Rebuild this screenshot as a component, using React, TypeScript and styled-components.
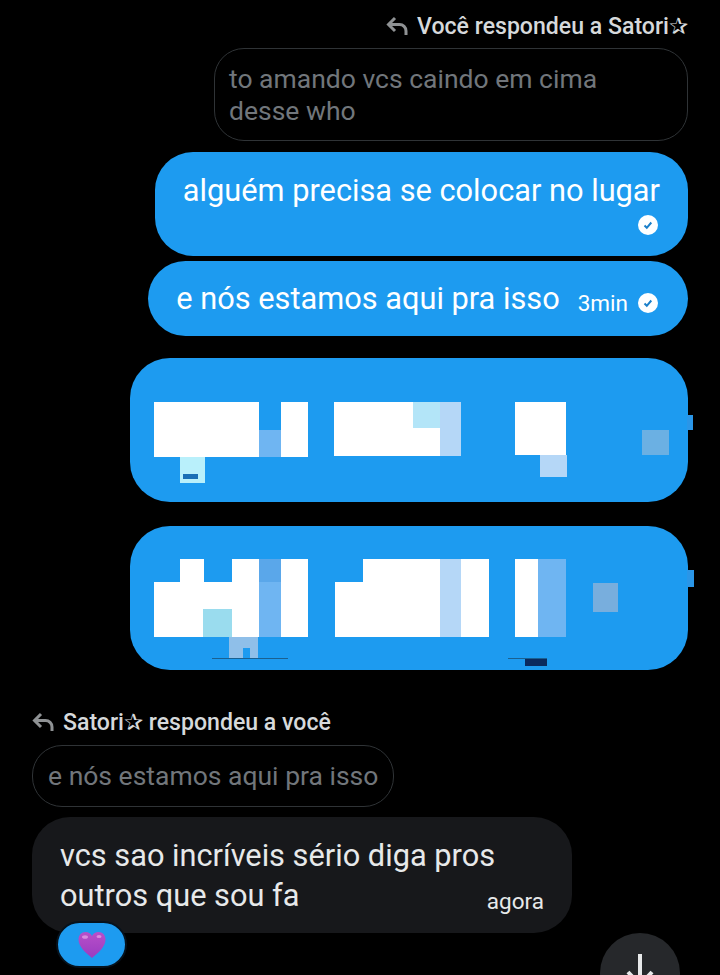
import styled, { createGlobalStyle } from "styled-components";

const BLUE = "#1d9bf0";
const PALE = "#b5d7f7";
const MID = "#6fb5f2";

const GlobalStyle = createGlobalStyle`
  html, body {
    margin: 0;
    padding: 0;
    background: #000;
  }
`;

const Page = styled.div`
  position: relative;
  width: 720px;
  height: 975px;
  overflow: hidden;
  background: #000;
  font-family: Roboto, "Liberation Sans", sans-serif;
  display: flex;
  flex-direction: column;
`;

const Group = styled.section<{ $mine?: boolean }>`
  display: flex;
  flex-direction: column;
  align-items: ${(p) => (p.$mine ? "flex-end" : "flex-start")};
  padding: ${(p) => (p.$mine ? "12px 32px 0 0" : "38px 0 0 32px")};
`;

const ReplyLabel = styled.div`
  display: flex;
  align-items: center;
  gap: 9px;
  height: 28px;
  color: #d6d9db;
  font-size: 23.100px;
  font-weight: 500;
  white-space: nowrap;
`;

const Quote = styled.div<{ $wide?: boolean }>`
  box-sizing: border-box;
  margin-top: ${(p) => (p.$wide ? "8px" : "9px")};
  width: ${(p) => (p.$wide ? "474px" : "362px")};
  height: ${(p) => (p.$wide ? "93px" : "62px")};
  padding: ${(p) => (p.$wide ? "14px 80px 0 14px" : "14px 15px 0")};
  border: 1.5px solid #2f3336;
  border-radius: 30px;
  color: #71767b;
  font-size: 26.500px;
  line-height: 32px;
  white-space: ${(p) => (p.$wide ? "normal" : "nowrap")};
`;

const Bubble = styled.div<{ $top: number; $h: number; $padTop: number }>`
  box-sizing: border-box;
  margin-top: ${(p) => p.$top}px;
  height: ${(p) => p.$h}px;
  padding: ${(p) => p.$padTop}px 28px 0;
  background: ${BLUE};
  border-radius: 38px;
  color: #fff;
  font-size: 30.750px;
  line-height: 38px;
  white-space: nowrap;
`;

const MetaRow = styled.div`
  display: flex;
  justify-content: flex-end;
  margin: 5px 2px 0 0;
`;

const InlineRow = styled.div`
  display: flex;
  align-items: center;
  gap: 18px;
`;

const Time = styled.span`
  font-size: 22.500px;
  margin-top: 8px;
  margin-right: -8px;
`;

const CheckWrap = styled.span`
  display: flex;
  margin-top: 8px;
  margin-right: 2px;
`;

const CensoredBubble = styled.div<{ $top: number }>`
  margin-top: ${(p) => p.$top}px;
  width: 558px;
  height: 144px;
  background: ${BLUE};
  border-radius: 40px;
`;

const CensorSvg = styled.svg`
  display: block;
  overflow: visible;
`;

const TheirBubble = styled.div`
  box-sizing: border-box;
  margin-top: 10px;
  width: 540px;
  height: 116px;
  padding: 19px 28px 0;
  background: #17181b;
  border-radius: 38px;
  color: #e7e9ea;
  font-size: 30.750px;
  line-height: 40px;
`;

const LastLine = styled.div`
  display: flex;
  justify-content: space-between;
`;

const Agora = styled.span`
  font-size: 22.500px;
  margin-top: 5px;
`;

const Reaction = styled.div`
  position: relative;
  margin: -12px 0 0 24px;
  box-sizing: border-box;
  width: 71px;
  height: 47px;
  border: 2px solid #06121d;
  border-radius: 24px;
  background: ${BLUE};
  display: flex;
  align-items: center;
  justify-content: center;
`;

const ScrollButton = styled.button`
  position: absolute;
  left: 600px;
  top: 933px;
  width: 80px;
  height: 80px;
  padding: 0;
  border: none;
  border-radius: 50%;
  background: #26282b;
  display: flex;
  justify-content: center;
`;

function ReplyIcon() {
  return (
    <svg width="22" height="20" viewBox="0 0 22 20" fill="none" stroke="#8f9294" strokeWidth="3">
      <path d="M9 2 2.500 8.500 9 15" />
      <path d="M3 8.500h10.500a6.500 6.500 0 0 1 6.500 6.500v4" />
    </svg>
  );
}

function CheckIcon() {
  return (
    <svg width="20" height="20" viewBox="0 0 20 20">
      <circle cx="10" cy="10" r="10" fill="#fff" />
      <path d="M6.500 10.500 8.800 12.800l4.500-5.300" fill="none" stroke="#1b7fc9" strokeWidth="2" />
    </svg>
  );
}

function Heart() {
  return (
    <svg width="30" height="28" viewBox="0 0 30 28">
      <defs>
        <linearGradient id="heartFill" x1="0" y1="0" x2="0" y2="1">
          <stop offset="0" stopColor="#b84fc9" />
          <stop offset="1" stopColor="#9a3cc0" />
        </linearGradient>
      </defs>
      <path
        d="M15 27C9 22 1.500 16 1.500 8.500 1.500 4 4.500 1 8.500 1c2.800 0 5.200 1.500 6.500 4 1.300-2.500 3.700-4 6.500-4 4 0 7 3 7 7.500C28.500 16 21 22 15 27z"
        fill="url(#heartFill)"
      />
      <ellipse cx="8" cy="6" rx="3" ry="1.800" fill="#d98be0" />
      <ellipse cx="22" cy="5.500" rx="2.500" ry="1.500" fill="#d98be0" />
    </svg>
  );
}

type Block = [number, number, number, number, string];

const firstBlocks: Block[] = [
  [24, 44, 105, 55, "#fff"],
  [129, 72, 22, 27, MID],
  [151, 44, 27, 55, "#fff"],
  [204, 44, 79, 54, "#fff"],
  [283, 70, 27, 28, "#fff"],
  [283, 44, 27, 26, "#b3e5f8"],
  [310, 44, 21, 54, PALE],
  [385, 44, 51, 53, "#fff"],
  [410, 97, 27, 22, PALE],
  [50, 99, 25, 26, "#b9f0fb"],
  [53, 116, 15, 5, "#1a6fb5"],
  [512, 72, 27, 25, "#6bb0e3"],
  [557, 57, 6, 15, "#2a96e8"],
];

const secondBlocks: Block[] = [
  [24, 56, 105, 55, "#fff"],
  [50, 33, 24, 23, "#fff"],
  [102, 33, 27, 23, "#fff"],
  [73, 83, 29, 28, "#9adcee"],
  [129, 33, 22, 23, "#5aa7ea"],
  [129, 56, 22, 55, MID],
  [151, 33, 27, 78, "#fff"],
  [99, 111, 29, 21, "#8fbfe9"],
  [113, 122, 7, 10, BLUE],
  [82, 132, 76, 1, "#1a6090"],
  [205, 56, 105, 55, "#fff"],
  [233, 33, 77, 23, "#fff"],
  [310, 33, 21, 78, PALE],
  [331, 33, 28, 78, "#fff"],
  [385, 33, 23, 78, "#fff"],
  [408, 33, 28, 78, MID],
  [463, 57, 25, 29, "#78aedd"],
  [378, 132, 39, 1, "#1a6090"],
  [395, 133, 22, 7, "#0a2a5e"],
  [557, 44, 7, 17, "#2a96e8"],
];

function Censored({ blocks, top }: { blocks: Block[]; top: number }) {
  return (
    <CensoredBubble $top={top}>
      <CensorSvg width="558" height="144" viewBox="0 0 558 144">
        {blocks.map(([x, y, w, h, fill], i) => (
          <rect key={i} x={x} y={y} width={w} height={h} fill={fill} />
        ))}
      </CensorSvg>
    </CensoredBubble>
  );
}

export default function App() {
  return (
    <Page>
      <GlobalStyle />
      <Group $mine>
        <ReplyLabel>
          <ReplyIcon />
          <span>Você respondeu a Satori✰</span>
        </ReplyLabel>
        <Quote $wide>to amando vcs caindo em cima desse who</Quote>
        <Bubble $top={11} $h={104} $padTop={20}>
          alguém precisa se colocar no lugar
          <MetaRow>
            <CheckIcon />
          </MetaRow>
        </Bubble>
        <Bubble $top={5} $h={75} $padTop={15}>
          <InlineRow>
            <span>e nós estamos aqui pra isso</span>
            <Time>3min</Time>
            <CheckWrap>
              <CheckIcon />
            </CheckWrap>
          </InlineRow>
        </Bubble>
        <Censored blocks={firstBlocks} top={22} />
        <Censored blocks={secondBlocks} top={24} />
      </Group>
      <Group>
        <ReplyLabel>
          <ReplyIcon />
          <span>Satori✰ respondeu a você</span>
        </ReplyLabel>
        <Quote>e nós estamos aqui pra isso</Quote>
        <TheirBubble>
          vcs sao incríveis sério diga pros
          <LastLine>
            <span>outros que sou fa</span>
            <Agora>agora</Agora>
          </LastLine>
        </TheirBubble>
        <Reaction>
          <Heart />
        </Reaction>
      </Group>
      <ScrollButton aria-label="Ir para o fim">
        <svg width="40" height="60" viewBox="0 0 40 60" fill="none" stroke="#e7e9ea" strokeWidth="4">
          <path d="M20 21v37M8 39l12 13 12-13" />
        </svg>
      </ScrollButton>
    </Page>
  );
}
